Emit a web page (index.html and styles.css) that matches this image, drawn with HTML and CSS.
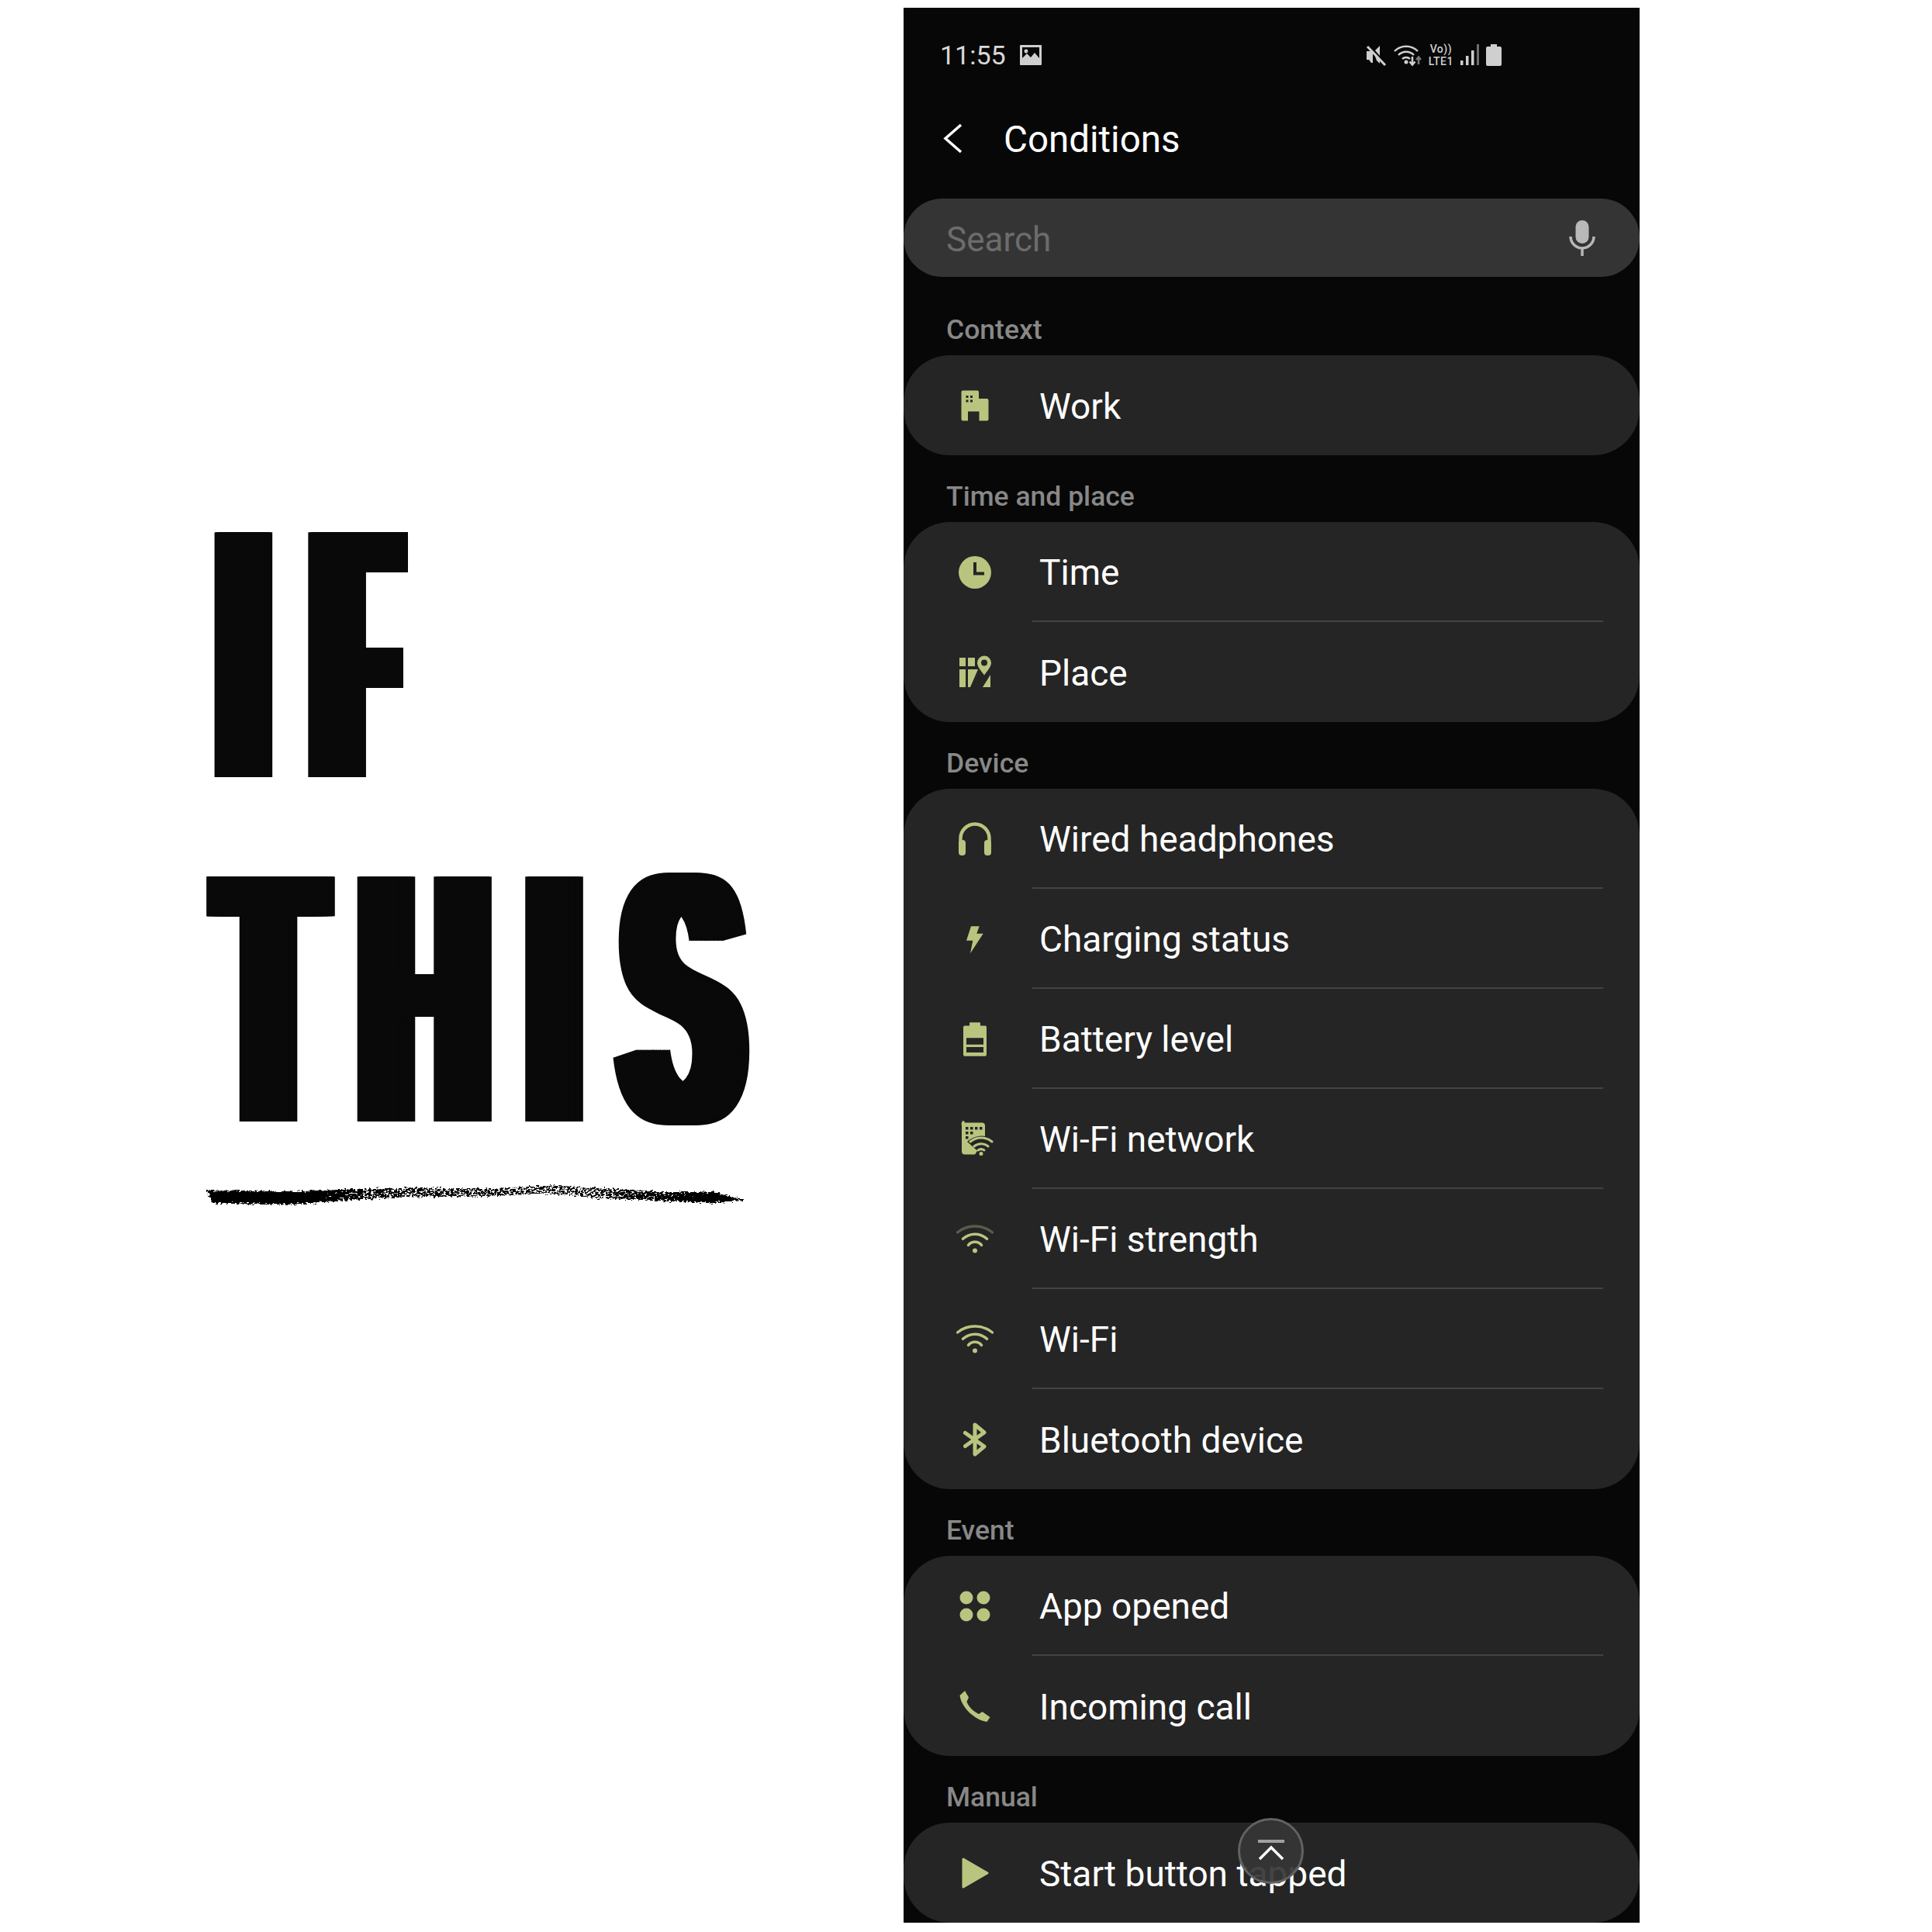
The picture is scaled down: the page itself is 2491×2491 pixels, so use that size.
FILE: index.html

```html
<!DOCTYPE html>
<html lang="en">
<head>
  <meta charset="UTF-8" />
  <title>If this - Conditions</title>
  <meta name="viewport" content="width=device-width, initial-scale=1.0" />
  <link rel="stylesheet" href="styles.css">
</head>
<body>

<section class="poster">
  <h1 class="headline">
    <span class="word">I<span class="short-arms">F</span></span>
    <span class="word"><span class="short-bar">T</span>HI<span class="wide-s">S</span></span>
  </h1>
  <svg class="brush" viewBox="0 0 720 44" width="720" height="44">
    <defs>
      <linearGradient id="brushFade" x1="0" x2="1" y1="0" y2="0">
        <stop offset="0" stop-color="#000" stop-opacity="1" />
        <stop offset="0.14" stop-color="#000" stop-opacity="0.9" />
        <stop offset="0.3" stop-color="#000" stop-opacity="0.52" />
        <stop offset="0.72" stop-color="#000" stop-opacity="0.47" />
        <stop offset="0.88" stop-color="#000" stop-opacity="0.66" />
        <stop offset="1" stop-color="#000" stop-opacity="1" />
      </linearGradient>
      <filter id="brushGrain" filterUnits="userSpaceOnUse" x="0" y="0" width="720" height="44">
        <feTurbulence type="fractalNoise" baseFrequency="0.3 0.5" numOctaves="3" seed="11" result="noise" />
        <feDisplacementMap in="SourceGraphic" in2="noise" scale="7" xChannelSelector="R" yChannelSelector="G" result="rough" />
        <feComposite in="rough" in2="noise" operator="arithmetic" k1="0" k2="1" k3="1" k4="-0.93" result="sum" />
        <feComponentTransfer in="sum" result="hard">
          <feFuncA type="linear" slope="16" intercept="0" />
        </feComponentTransfer>
        <feFlood flood-color="#000" />
        <feComposite in2="hard" operator="in" />
      </filter>
    </defs>
    <path fill="url(#brushFade)" filter="url(#brushGrain)" d="M5 15 L123 16 L186 13 L269 11 L366 12 L453 8 L535 13 L598 17 L657 17 L698 27 L657 31 L598 29 L511 25 L438 19 L366 23 L269 23 L182 28 L114 33 L12 31 Z" />
  </svg>
</section>

<main class="phone">
  <div class="status-bar">
    <div class="status-left">
      <span class="clock">11:55</span>
      <svg class="status-icon" width="30" height="28" viewBox="0 0 30 28">
        <path fill="#cfcfcf" fill-rule="evenodd" d="M2 1H28A1 1 0 0 1 29 2V26A1 1 0 0 1 28 27H2A1 1 0 0 1 1 26V2A1 1 0 0 1 2 1ZM4 4V18L10 12L15 17L20 11L26 18V4ZM9 6.500A2.500 2.500 0 1 1 8.900 6.500Z" />
      </svg>
    </div>
    <div class="status-right">
      <svg width="28" height="28" viewBox="0 0 26 28">
        <path fill="#cfcfcf" d="M1 9H7L9 11V24H7L4 20H1ZM12 8L18 2V15ZM11 13L18 20V25L14 21Z" />
        <path stroke="#cfcfcf" stroke-width="3" d="M2 3L25 27" />
      </svg>
      <svg width="36" height="30" viewBox="0 0 36 30">
        <g fill="none" stroke="#cfcfcf" stroke-width="2.500">
          <path d="M1 10A21 21 0 0 1 31 10" />
          <path d="M6 15A14 14 0 0 1 26 15" />
          <path d="M11 20A7 7 0 0 1 21 20" />
          <path d="M24 17V27M20.500 23.500L24 27.500L27.500 23.500" />
        </g>
        <circle cx="16" cy="24" r="2.500" fill="#cfcfcf" />
        <path stroke="#777" stroke-width="2.500" fill="none" d="M32 27V18M29 21L32 17.500L35 21" />
      </svg>
      <div class="net-type">
        <span>Vo))</span>
        <span>LTE1</span>
      </div>
      <svg width="24" height="30" viewBox="0 0 24 30">
        <rect x="0" y="22" width="3.500" height="6" fill="#cfcfcf" />
        <rect x="7" y="16" width="3.500" height="12" fill="#cfcfcf" />
        <rect x="14" y="9" width="3.500" height="19" fill="#cfcfcf" />
        <rect x="21" y="1" width="3" height="27" fill="#6d6d6d" />
      </svg>
      <svg width="20" height="30" viewBox="0 0 20 30">
        <path fill="#cfcfcf" d="M6 1H14V4H18A2 2 0 0 1 20 6V27A2 2 0 0 1 18 29H2A2 2 0 0 1 0 27V6A2 2 0 0 1 2 4H6Z" />
      </svg>
    </div>
  </div>

  <header class="title-bar">
    <svg class="back" width="28" height="44" viewBox="0 0 28 44">
      <path fill="none" stroke="#fff" stroke-width="3.500" d="M24 3L4 20.500L24 38" />
    </svg>
    <span class="title">Conditions</span>
  </header>

  <div class="search">
    <span class="search-text">Search</span>
    <svg width="48" height="48" viewBox="0 0 48 48">
      <rect x="15.500" y="1" width="17" height="30" rx="8.500" fill="#b8b8b8" />
      <path fill="none" stroke="#b8b8b8" stroke-width="3.500" d="M9 22A15 15 0 0 0 39 22M24 37V47" />
    </svg>
  </div>

  <div class="group-label">Context</div>
  <div class="card">
    <div class="row">
      <svg class="icon" viewBox="0 0 48 48">
        <path class="fill" d="M8.500 4.500H27A2 2 0 0 1 29 6.500V15H39.500A2 2 0 0 1 41.500 17V41.500A2 2 0 0 1 39.500 43.500H29.500V31.500H15V43.500H8.500A2 2 0 0 1 6.500 41.500V6.500A2 2 0 0 1 8.500 4.500Z" />
        <path class="cut" d="M12.500 11H15.500V14H12.500ZM18 11H21V14H18ZM12.500 16.500H15.500V19.500H12.500ZM18 16.500H21V19.500H18Z" />
      </svg>
      <div class="row-text">Work</div>
    </div>
  </div>

  <div class="group-label">Time and place</div>
  <div class="card">
    <div class="row">
      <svg class="icon" viewBox="0 0 48 48">
        <circle class="fill" cx="24" cy="24" r="21" />
        <path class="cut-line" d="M24 11V25.500H36" />
      </svg>
      <div class="row-text">Time</div>
    </div>
    <div class="row">
      <svg class="icon" viewBox="0 0 48 48">
        <path class="fill" d="M4 5H12V16H4ZM15 5H24V16H15ZM4 20H12V43H4ZM15 20H28L18 43H15ZM44 27V43H34ZM36 2.500A9 9 0 0 1 45 11.500C45 17 39 23 36 27.500C33 23 27 17 27 11.500A9 9 0 0 1 36 2.500Z" />
        <circle class="cut" cx="36" cy="11.500" r="4" />
      </svg>
      <div class="row-text">Place</div>
    </div>
  </div>

  <div class="group-label">Device</div>
  <div class="card">
    <div class="row">
      <svg class="icon" viewBox="0 0 48 48">
        <path class="line" stroke-width="4.500" d="M5.500 30V23A18.500 18.500 0 0 1 42.500 23V30" />
        <rect class="fill" x="3" y="25" width="9" height="20" rx="4" />
        <rect class="fill" x="36" y="25" width="9" height="20" rx="4" />
      </svg>
      <div class="row-text">Wired headphones</div>
    </div>
    <div class="row">
      <svg class="icon" viewBox="0 0 48 48">
        <path class="fill" d="M19 7.300H29.700L26.300 16.700H34.700L18 42.300L21.300 25.700H13Z" />
      </svg>
      <div class="row-text">Charging status</div>
    </div>
    <div class="row">
      <svg class="icon" viewBox="0 0 48 48">
        <path class="fill" d="M18 2.300H30A1 1 0 0 1 31 3.300V6.500H37A2 2 0 0 1 39 8.500V43.700A2 2 0 0 1 37 45.700H11A2 2 0 0 1 9 43.700V8.500A2 2 0 0 1 11 6.500H17V3.300A1 1 0 0 1 18 2.300Z" />
        <path class="cut" d="M13 22.300H35V30.700H13ZM13 34H35V41H13Z" />
      </svg>
      <div class="row-text">Battery level</div>
    </div>
    <div class="row">
      <svg class="icon" viewBox="0 0 48 48">
        <path class="fill" d="M11 2.500H33A4 4 0 0 1 37 6.500V24L24 43.500H11A4 4 0 0 1 7 39.500V6.500A2 4 0 0 1 11 2.500Z" />
        <path class="cut" d="M12 8H15.500V11.500H12ZM18 8H21.500V11.500H18ZM24 8H27.500V11.500H24ZM30 8H33.500V11.500H30ZM12 14H15.500V17.500H12ZM12 20H15.500V23.500H12ZM18 14H21.500V17.500H18Z" />
        <path class="cut" d="M33 44L14 27A28 28 0 0 1 52 27Z" />
        <g class="line" stroke-width="3">
          <path d="M18 27A22 22 0 0 1 46 27" />
          <path d="M23 33A14 14 0 0 1 41 33" />
          <path d="M28 38A7 7 0 0 1 36 38" />
        </g>
        <circle class="fill" cx="32" cy="42.500" r="2.500" />
      </svg>
      <div class="row-text">Wi-Fi network</div>
    </div>
    <div class="row">
      <svg class="icon" viewBox="0 0 48 48">
        <g class="line" stroke-width="3.500">
          <path class="dim" d="M1.500 15A36 36 0 0 1 46.500 15" />
          <path d="M8.500 23.300A22.700 22.700 0 0 1 39.500 23.300" />
          <path d="M15.500 31.300A11 11 0 0 1 32.500 31.300" />
        </g>
        <circle class="fill" cx="24" cy="38.500" r="3" />
      </svg>
      <div class="row-text">Wi-Fi strength</div>
    </div>
    <div class="row">
      <svg class="icon" viewBox="0 0 48 48">
        <g class="line" stroke-width="3.500">
          <path d="M1.500 15A36 36 0 0 1 46.500 15" />
          <path d="M8.500 23.300A22.700 22.700 0 0 1 39.500 23.300" />
          <path d="M15.500 31.300A11 11 0 0 1 32.500 31.300" />
        </g>
        <circle class="fill" cx="24" cy="38.500" r="3" />
      </svg>
      <div class="row-text">Wi-Fi</div>
    </div>
    <div class="row">
      <svg class="icon" viewBox="0 0 48 48">
        <path class="line" stroke-width="5" stroke-linejoin="round" d="M11.500 15.500L36 33L24 43V5L36 15L11.500 32.500" />
      </svg>
      <div class="row-text">Bluetooth device</div>
    </div>
  </div>

  <div class="group-label">Event</div>
  <div class="card">
    <div class="row">
      <svg class="icon" viewBox="0 0 48 48">
        <circle class="fill" cx="13" cy="13" r="8.500" />
        <circle class="fill" cx="35" cy="13" r="8.500" />
        <circle class="fill" cx="13" cy="35" r="8.500" />
        <circle class="fill" cx="35" cy="35" r="8.500" />
      </svg>
      <div class="row-text">App opened</div>
    </div>
    <div class="row">
      <svg class="icon" viewBox="0 0 48 48">
        <path class="fill" d="M11 4L16 12.500L13.500 18C15.500 24 21.500 30.500 29 34L33.500 31L43.500 38L39.500 44C25 42 7 27 4.500 10Z" />
      </svg>
      <div class="row-text">Incoming call</div>
    </div>
  </div>

  <div class="group-label">Manual</div>
  <div class="card">
    <div class="row">
      <svg class="icon" viewBox="0 0 48 48">
        <path class="fill play" d="M9 6L40 24L9 42Z" />
      </svg>
      <div class="row-text">Start button tapped</div>
    </div>
  </div>

  <button class="to-top">
    <svg width="40" height="32" viewBox="0 0 40 32">
      <path stroke="#a0a0a0" stroke-width="4" d="M3 3H37" />
      <path fill="none" stroke="#fff" stroke-width="3.500" d="M5 26L20 11L35 26" />
    </svg>
  </button>
</main>

</body>
</html>
```

FILE: styles.css

```css
html, body {
  margin: 0;
  padding: 0;
}

body {
  display: flex;
  align-items: flex-start;
  background-color: #fff;
  font-family: "Roboto", "Liberation Sans", sans-serif;
}

.poster {
  flex: none;
  width: 901px;
  padding: 621px 0 0 264px;
}

/* no heavy condensed font here: squeeze a bold one and smear it sideways */
.headline {
  margin: 0 0 0 19px;
  height: 888px;
  font-family: "Liberation Sans", sans-serif;
  font-size: 459px;
  font-weight: bold;
  font-kerning: none;
  line-height: 444px;
  letter-spacing: 116px;
  white-space: nowrap;
  color: #090909;
  text-shadow:
    -44px 0 #090909, -39px 0 #090909, -34px 0 #090909, -29px 0 #090909,
    -24px 0 #090909, -19px 0 #090909, -14px 0 #090909, -9px 0 #090909,
    -4px 0 #090909, 4px 0 #090909, 9px 0 #090909, 14px 0 #090909,
    19px 0 #090909, 24px 0 #090909, 29px 0 #090909, 34px 0 #090909,
    39px 0 #090909, 44px 0 #090909;
  transform: scaleX(0.484);
  transform-origin: 0 0;
}

.word {
  display: block;
}

.short-arms {
  display: inline-block;
  margin-left: 6px;
  clip-path: polygon(-100px -100px, 252px -100px, 252px 155px, 240px 155px, 240px 544px, -100px 544px);
}

.short-bar {
  display: inline-block;
  margin-left: -10px;
  letter-spacing: 110px;
  clip-path: inset(-100px 73px -100px -24px);
}

.wide-s {
  display: inline-block;
  margin-left: 8px;
}

.brush {
  display: block;
  margin: 11px 0 0 -2px;
}

.phone {
  position: relative;
  flex: none;
  width: 949px;
  height: 2469px;
  margin-top: 10px;
  overflow: hidden;
  background-color: #070707;
}

.status-bar {
  display: flex;
  justify-content: space-between;
  align-items: center;
  height: 122px;
  padding: 0 178px 0 47px;
  box-sizing: border-box;
}

.status-left, .status-right {
  display: flex;
  align-items: center;
}

.status-left {
  gap: 17px;
}

.status-right {
  gap: 9px;
}

.clock {
  font-size: 34px;
  color: #d8d8d8;
}

.net-type {
  display: flex;
  flex-direction: column;
  align-items: center;
  font-size: 14px;
  font-weight: 500;
  line-height: 16px;
  letter-spacing: 0.5px;
  color: #cfcfcf;
}

.title-bar {
  display: flex;
  align-items: center;
  height: 96px;
  padding-left: 50px;
  gap: 51px;
}

.back {
  flex: none;
}

.title {
  font-size: 47.5px;
  color: #fff;
}

.search {
  display: flex;
  justify-content: space-between;
  align-items: center;
  height: 101px;
  margin: 28px 0 15px;
  padding: 0 50px 0 55px;
  box-sizing: border-box;
  border-radius: 50px;
  background-color: #343434;
}

.search-text {
  padding-top: 4px;
  font-size: 44px;
  color: #6c6c6c;
}

.group-label {
  height: 86px;
  padding: 35px 0 0 55px;
  box-sizing: border-box;
  font-size: 35.5px;
  font-weight: 500;
  line-height: 36px;
  color: #888;
}

.card {
  border-radius: 60px;
  background-color: #252525;
}

.row {
  display: flex;
  align-items: center;
  height: 129px;
  padding-left: 68px;
}

.icon {
  flex: none;
  width: 48px;
  height: 48px;
}

.fill {
  fill: #b9c47f;
}

.cut {
  fill: #252525;
}

.cut-line {
  fill: none;
  stroke: #252525;
  stroke-width: 4;
}

.line {
  fill: none;
  stroke: #b9c47f;
  stroke-linecap: round;
}

.dim {
  stroke: #585c49;
}

.play {
  stroke: #b9c47f;
  stroke-width: 3;
  stroke-linejoin: round;
}

.row-text {
  display: flex;
  flex: 1;
  align-items: center;
  height: 100%;
  margin: 0 47px 0 50px;
  padding: 2px 0 0 9px;
  box-sizing: border-box;
  border-bottom: 2px solid #434343;
  font-size: 46px;
  color: #fff;
}

.row:last-child .row-text {
  border-bottom: none;
}

.to-top {
  position: absolute;
  left: 431px;
  bottom: 50px;
  display: flex;
  justify-content: center;
  align-items: center;
  width: 85px;
  height: 85px;
  padding: 0;
  box-sizing: border-box;
  border: 3px solid #626262;
  border-radius: 50%;
  background-color: rgba(54, 54, 54, 0.93);
}
```
